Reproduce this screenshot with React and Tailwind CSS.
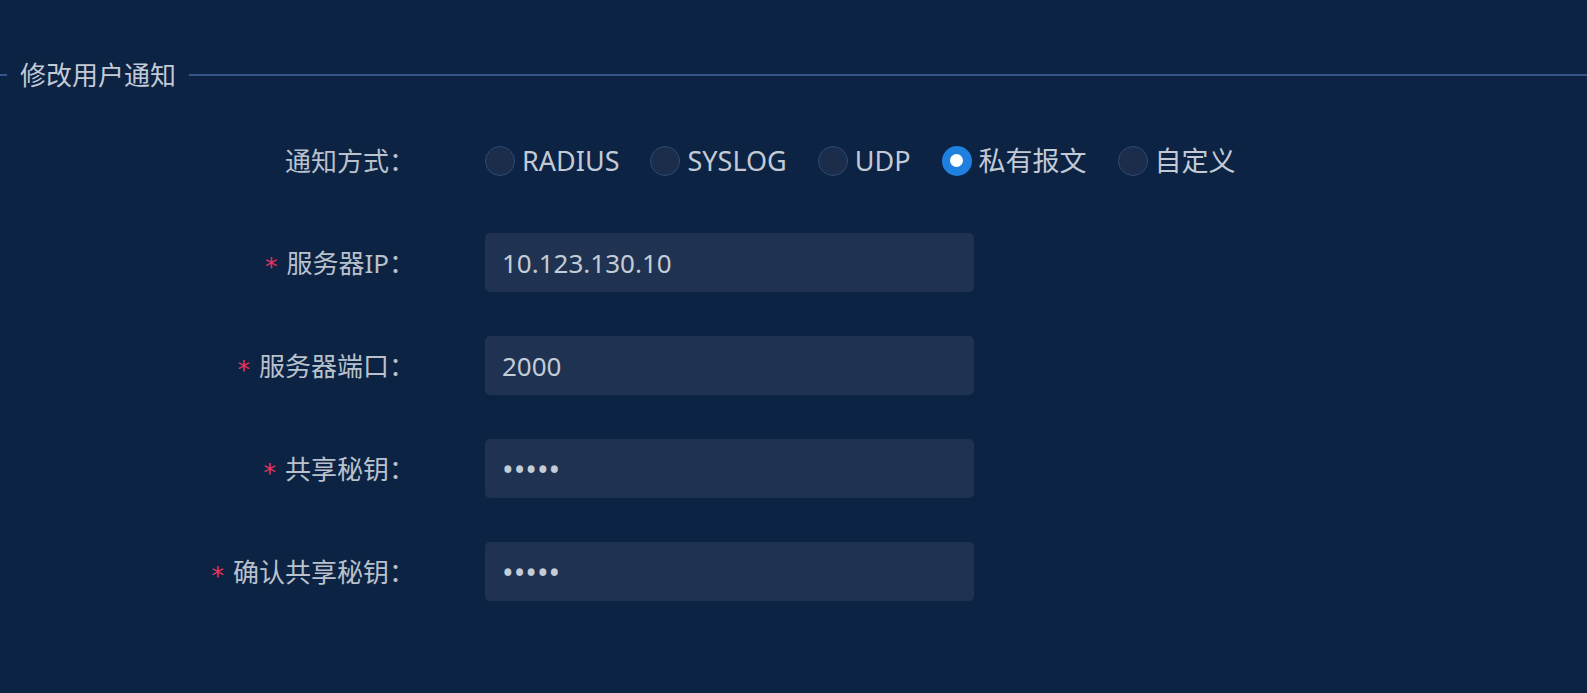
import React from "react";

const FONT = "font-['Noto_Sans','Noto_Sans_CJK_SC',sans-serif]";

function Radio({ label, checked }) {
  return (
    <label className="flex items-center gap-[7px] cursor-pointer">
      {checked ? (
        <span className="w-[30px] h-[30px] rounded-full bg-[#1f80e0] flex items-center justify-center">
          <span className="w-[13px] h-[13px] rounded-full bg-white" />
        </span>
      ) : (
        <span className="w-[30px] h-[30px] rounded-full bg-[#1b2d4b] border-[1.5px] border-[#2c4b77]" />
      )}
      <span className="text-[#c3cad5] text-[27px] leading-none">{label}</span>
    </label>
  );
}

function Row({ label, required, children }) {
  return (
    <div className="flex items-center h-[59px]">
      <div className="w-[415px] flex items-center justify-end text-[#b9c1cc] text-[26px]">
        {required && (
          <span className="text-[#e8345c] text-[25px] leading-none font-['DejaVu_Sans',sans-serif] mr-[9px] translate-y-[4px]">*</span>
        )}
        <span className="leading-none">{label}</span>
      </div>
      <div className="ml-[70px] h-full flex items-center">{children}</div>
    </div>
  );
}

function Field({ value, type = "text" }) {
  const pw = type === "password";
  return (
    <input
      readOnly
      type={type}
      value={value}
      className={`w-[489px] h-[59px] rounded-[5px] bg-[#1f3251] px-[17px] text-[#c4ccd6] outline-none border-none ${FONT} ${pw ? "text-[31px]" : "text-[26px]"}`}
    />
  );
}

export default function App() {
  return (
    <div className={`min-h-screen w-full bg-[#0c2344] text-[26px] ${FONT}`}>
      <div className="pt-[57px]">
        <div className="flex items-center h-[36px]">
          <div className="w-[7px] h-[2px] bg-[#34568a]" />
          <span className="px-[13px] text-[#c3cad5] leading-none">修改用户通知</span>
          <div className="flex-1 h-[2px] bg-[#34568a]" />
        </div>
        <div className="mt-[38px] flex flex-col">
          <Row label="通知方式：">
            <div className="flex items-center gap-[31px]">
              <Radio label="RADIUS" />
              <Radio label="SYSLOG" />
              <Radio label="UDP" />
              <Radio label="私有报文" checked />
              <Radio label="自定义" />
            </div>
          </Row>
          <div className="mt-[43px] flex flex-col gap-[44px]">
            <Row label="服务器IP：" required>
              <Field value="10.123.130.10" />
            </Row>
            <Row label="服务器端口：" required>
              <Field value="2000" />
            </Row>
            <Row label="共享秘钥：" required>
              <Field value="12345" type="password" />
            </Row>
            <Row label="确认共享秘钥：" required>
              <Field value="12345" type="password" />
            </Row>
          </div>
        </div>
      </div>
    </div>
  );
}
